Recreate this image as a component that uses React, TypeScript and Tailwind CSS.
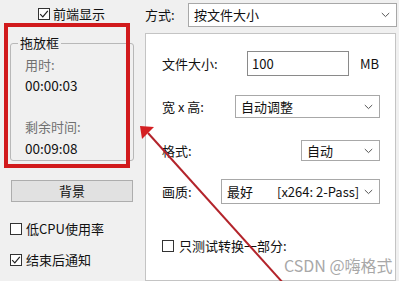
import React from "react";

const font = { fontFamily: '"Noto Sans CJK SC", "Noto Sans", sans-serif' };

function Check({ checked }: { checked?: boolean }) {
  return (
    <span className="relative inline-flex h-[12px] w-[12px] shrink-0 items-center justify-center border border-[#333] bg-white">
      {checked && (
        <svg width="10" height="10" viewBox="0 0 10 10" className="absolute">
          <path d="M1.2 5.2 L3.8 7.8 L8.8 1.8" fill="none" stroke="#222" strokeWidth="1.2" />
        </svg>
      )}
    </span>
  );
}

function Chevron() {
  return (
    <svg width="9" height="6" viewBox="0 0 9 6" className="shrink-0">
      <path d="M0.8 1 L4.5 4.6 L8.2 1" fill="none" stroke="#555" strokeWidth="1" />
    </svg>
  );
}

export default function App() {
  return (
    <div
      className="relative flex h-[281px] w-[399px] overflow-hidden bg-[#f0f0f0] text-[13px] leading-[18px] text-[#111]"
      style={font}
    >
      {/* Left column */}
      <div className="flex w-[145px] shrink-0 flex-col">
        <div className="flex h-[34px] items-start pl-[38px] pt-[8px]">
          <Check checked />
          <span className="ml-[3px] -mt-[3px]">前端显示</span>
        </div>
        <fieldset className="ml-[10px] h-[127px] w-[124px] rounded-[3px] border border-[#b8b8b8] pl-[14px]">
          <legend className="-ml-[7px] px-[2px] text-[13px] leading-[18px] text-[#111]">拖放框</legend>
          <div className="mt-[4px] text-[#707070]">用时:</div>
          <div className="mt-[2px] text-[13.5px]">00:00:03</div>
          <div className="mt-[24px] text-[#707070]">剩余时间:</div>
          <div className="mt-[3px] text-[13.5px]">00:09:08</div>
        </fieldset>
        <div className="ml-[11px] mt-[19px] flex h-[22px] w-[122px] items-center justify-center border border-[#adadad] bg-[#e1e1e1]">
          背景
        </div>
        <div className="ml-[10px] mt-[18px] flex items-center">
          <Check />
          <span className="ml-[4px]">低CPU使用率</span>
        </div>
        <div className="ml-[10px] mt-[13px] flex items-center">
          <Check checked />
          <span className="ml-[4px]">结束后通知</span>
        </div>
      </div>

      {/* Right column */}
      <div className="flex flex-1 flex-col">
        <div className="flex h-[33px] items-start pt-[3px]">
          <span className="mt-[3px] w-[43px]">方式:</span>
          <div className="flex h-[24px] w-[209px] items-center border border-[#a8a8a8] bg-white pl-[5px] pr-[6px]">
            <span className="flex-1">按文件大小</span>
            <Chevron />
          </div>
        </div>
        <div className="flex w-[251px] flex-1 flex-col border border-[#c4c4c4] bg-white pl-[16px] pt-[17px]">
          <div className="flex h-[25px] items-center">
            <span className="w-[85px]">文件大小:</span>
            <div className="flex h-[25px] w-[102px] items-center border border-[#8a8a8a] pl-[4px]">100</div>
            <span className="ml-[11px]">MB</span>
          </div>
          <div className="mt-[19px] flex h-[23px] items-center">
            <span className="w-[73px]">宽 x 高:</span>
            <div className="flex h-[23px] w-[145px] items-center border border-[#a8a8a8] pl-[5px] pr-[6px]">
              <span className="flex-1">自动调整</span>
              <Chevron />
            </div>
          </div>
          <div className="mt-[22px] flex h-[21px] items-center">
            <span className="w-[139px]">格式:</span>
            <div className="flex h-[21px] w-[79px] items-center border border-[#a8a8a8] pl-[5px] pr-[6px]">
              <span className="flex-1">自动</span>
              <Chevron />
            </div>
          </div>
          <div className="mt-[18px] flex h-[25px] items-center">
            <span className="w-[59px]">画质:</span>
            <div className="flex h-[25px] w-[159px] items-center border border-[#a8a8a8] pl-[5px] pr-[6px]">
              <span className="w-[50px]">最好</span>
              <span className="flex-1">[x264: 2-Pass]</span>
              <Chevron />
            </div>
          </div>
          <div className="mt-[35px] flex h-[14px] items-center">
            <Check />
            <span className="ml-[5px]">只测试转换一部分:</span>
          </div>
        </div>
      </div>

      {/* Watermark */}
      <div className="absolute left-[284px] top-[255px] text-[16px] leading-[20px] text-[#a8a8a8]">CSDN @嗨格式</div>

      {/* Annotation: red rectangle */}
      <div className="pointer-events-none absolute left-[4px] top-[23px] h-[145px] w-[126px] border-[4px] border-[#d11a1c]" />

      {/* Annotation: arrow */}
      <svg className="pointer-events-none absolute left-0 top-0" width="399" height="281" viewBox="0 0 399 281">
        <line x1="148" y1="133" x2="284" y2="284" stroke="#b3242b" strokeWidth="2" />
        <polygon points="140,126 154,127 142,139" fill="#d41f22" />
      </svg>
    </div>
  );
}
